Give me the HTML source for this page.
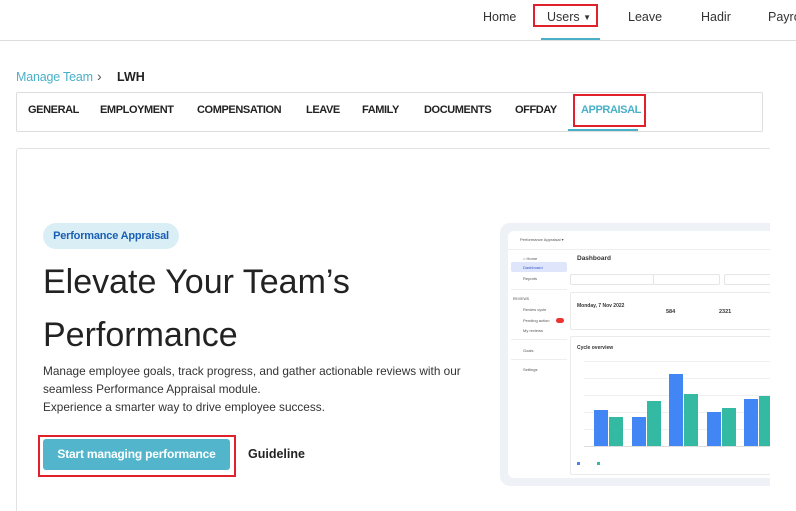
<!DOCTYPE html>
<html><head><meta charset="utf-8"><style>
*{margin:0;padding:0;box-sizing:border-box}
html,body{width:796px;height:511px;overflow:hidden}
body{background:#fff;font-family:"Liberation Sans",sans-serif;color:#222;position:relative}
.a{position:absolute;white-space:nowrap}
.nav{font-size:12.5px;color:#333;top:10px}
.tab{font-size:11px;font-weight:bold;color:#222;top:104px;letter-spacing:-0.4px}
.s{font-size:4px;color:#555}
.bar{position:absolute;bottom:0;width:14px}
.b{background:#4285f4}.g{background:#34b9a3}
</style></head><body>
<div class="a" style="left:0;top:40px;width:796px;height:1px;background:#ddd"></div>
<div class="a nav" style="left:483px">Home</div>
<div class="a nav" style="left:547px">Users <span style="font-size:8px;position:relative;top:-1px">&#9660;</span></div>
<div class="a" style="left:533px;top:4px;width:65px;height:23px;border:2px solid #e0202a"></div>
<div class="a" style="left:541px;top:38px;width:59px;height:2px;background:#4ab0c8"></div>
<div class="a nav" style="left:628px">Leave</div>
<div class="a nav" style="left:701px">Hadir</div>
<div class="a nav" style="left:768px">Payroll</div>

<div class="a" style="left:16px;top:70px;font-size:12.5px;color:#4ab0c8;letter-spacing:-0.2px">Manage Team</div>
<div class="a" style="left:97px;top:68px;font-size:14px;color:#555">&#8250;</div>
<div class="a" style="left:117px;top:70px;font-size:12.5px;font-weight:bold">LWH</div>

<div class="a" style="left:16px;top:92px;width:747px;height:40px;border:1px solid #ddd;border-radius:2px"></div>
<div class="a tab" style="left:28px">GENERAL</div>
<div class="a tab" style="left:100px">EMPLOYMENT</div>
<div class="a tab" style="left:197px">COMPENSATION</div>
<div class="a tab" style="left:306px">LEAVE</div>
<div class="a tab" style="left:362px">FAMILY</div>
<div class="a tab" style="left:424px">DOCUMENTS</div>
<div class="a tab" style="left:515px">OFFDAY</div>
<div class="a tab" style="left:581px;color:#4ab0c8">APPRAISAL</div>
<div class="a" style="left:573px;top:94px;width:73px;height:33px;border:2px solid #e0202a"></div>
<div class="a" style="left:568px;top:129px;width:70px;height:2px;background:#4ab0c8"></div>

<div class="a" style="left:16px;top:148px;width:800px;height:363px;border:1px solid #e2e2e2;border-bottom:none;border-radius:3px 0 0 0"></div>
<div class="a" style="left:43px;top:223px;width:136px;height:26px;border-radius:13px;background:#d9eff5;color:#1a5fb4;font-size:11px;font-weight:bold;text-align:center;line-height:26px;letter-spacing:-0.2px">Performance Appraisal</div>
<div class="a" style="left:43px;top:256px;font-size:34px;line-height:53px;color:#222">Elevate Your Team’s<br>Performance</div>
<div class="a" style="left:43px;top:362px;font-size:11.8px;line-height:18px;color:#333">Manage employee goals, track progress, and gather actionable reviews with our<br>seamless Performance Appraisal module.<br>Experience a smarter way to drive employee success.</div>
<div class="a" style="left:38px;top:435px;width:198px;height:42px;border:2px solid #e0202a"></div>
<div class="a" style="left:43px;top:439px;width:187px;height:31px;border-radius:3px;background:#52b5cc;color:#fff;font-size:12px;font-weight:bold;text-align:center;line-height:31px;letter-spacing:-0.2px">Start managing performance</div>
<div class="a" style="left:248px;top:447px;font-size:12.5px;font-weight:bold">Guideline</div>

<div class="a" style="left:500px;top:223px;width:270px;height:263px;background:#eef1f6;border-radius:10px 0 0 10px;overflow:hidden">
 <div class="a" style="left:8px;top:8px;width:262px;height:247px;background:#fff;border-radius:6px 0 0 6px">
  <div class="a s" style="left:12px;top:6px">Performance Appraisal ▾</div>
  <div class="a" style="left:0;top:18px;width:262px;height:1px;background:#eee"></div>
  <div class="a s" style="left:15px;top:25px">⌂ Home</div>
  <div class="a" style="left:3px;top:31px;width:56px;height:10px;background:#dfe6fb;border-radius:2px"></div>
  <div class="a s" style="left:15px;top:34px;color:#3355cc">Dashboard</div>
  <div class="a s" style="left:15px;top:45px">Reports</div>
  <div class="a" style="left:3px;top:58px;width:56px;height:1px;background:#eee"></div>
  <div class="a s" style="left:5px;top:66px;font-size:3.5px">REVIEWS</div>
  <div class="a s" style="left:15px;top:76px">Review cycle</div>
  <div class="a s" style="left:15px;top:87px">Pending action</div>
  <div class="a" style="left:48px;top:87px;width:8px;height:5px;background:#e33;border-radius:3px"></div>
  <div class="a s" style="left:15px;top:97px">My reviews</div>
  <div class="a" style="left:3px;top:108px;width:56px;height:1px;background:#eee"></div>
  <div class="a s" style="left:15px;top:117px">Goals</div>
  <div class="a" style="left:3px;top:128px;width:56px;height:1px;background:#eee"></div>
  <div class="a s" style="left:15px;top:136px">Settings</div>
  <div class="a" style="left:69px;top:24px;font-size:6.5px;font-weight:bold;color:#333">Dashboard</div>
  <div class="a" style="left:62px;top:43px;width:84px;height:11px;border:1px solid #e5e5e5;border-radius:2px"></div>
  <div class="a" style="left:145px;top:43px;width:67px;height:11px;border:1px solid #e5e5e5;border-radius:2px"></div>
  <div class="a" style="left:216px;top:43px;width:60px;height:11px;border:1px solid #e5e5e5;border-radius:2px"></div>
  <div class="a" style="left:62px;top:61px;width:210px;height:38px;border:1px solid #eaeaea;border-radius:2px"></div>
  <div class="a" style="left:69px;top:72px;font-size:5px;font-weight:bold;color:#333">Monday, 7 Nov 2022</div>
  <div class="a" style="left:158px;top:78px;font-size:5.5px;font-weight:bold;color:#333">584</div>
  <div class="a" style="left:211px;top:78px;font-size:5.5px;font-weight:bold;color:#333">2321</div>
  <div class="a" style="left:62px;top:105px;width:210px;height:139px;border:1px solid #eaeaea;border-radius:2px"></div>
  <div class="a" style="left:69px;top:114px;font-size:5px;font-weight:bold;color:#333">Cycle overview</div>
  <div class="a" style="left:76px;top:130px;width:190px;height:86px;border-bottom:1px solid #ddd;background:repeating-linear-gradient(to bottom,#f0f0f0 0,#f0f0f0 1px,transparent 1px,transparent 17px)">
   <div class="bar b" style="left:10px;height:36px"></div><div class="bar g" style="left:25px;height:29px"></div>
   <div class="bar b" style="left:48px;height:29px"></div><div class="bar g" style="left:63px;height:45px"></div>
   <div class="bar b" style="left:85px;height:72px"></div><div class="bar g" style="left:100px;height:52px"></div>
   <div class="bar b" style="left:123px;height:34px"></div><div class="bar g" style="left:138px;height:38px"></div>
   <div class="bar b" style="left:160px;height:47px"></div><div class="bar g" style="left:175px;height:50px"></div>
  </div>
  <div class="a" style="left:69px;top:231px;width:3px;height:3px;background:#4285f4"></div>
  <div class="a" style="left:89px;top:231px;width:3px;height:3px;background:#34b9a3"></div>
 </div>
</div>
<div class="a" style="left:770px;top:148px;width:26px;height:363px;background:#fff"></div>
</body></html>
